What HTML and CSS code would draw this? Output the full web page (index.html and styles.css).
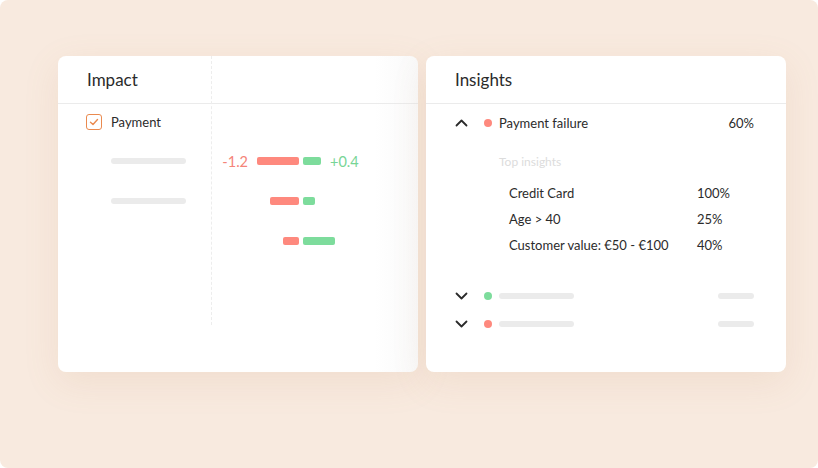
FILE: index.html
```html
<!DOCTYPE html>
<html lang="en">
<head>
  <meta charset="UTF-8">
  <title>Impact &amp; Insights</title>
  <link rel="stylesheet" href="styles.css">
</head>
<body>
  <div class="frame">

    <div class="card impact">
      <div class="col-labels">
        <div class="card-head">Impact</div>
        <div class="row first">
          <span class="checkbox">
            <svg width="10" height="8" viewBox="0 0 10 8"><path d="M1.5 4.2 L4 6.5 L8.5 1.5" fill="none" stroke="#ea8a4f" stroke-width="1.4" stroke-linecap="round" stroke-linejoin="round"/></svg>
          </span>
          <span class="label">Payment</span>
        </div>
        <div class="row"><span class="skeleton label-bar"></span></div>
        <div class="row"><span class="skeleton label-bar"></span></div>
      </div>

      <div class="col-chart">
        <div class="card-head"></div>
        <div class="row first"></div>
        <div class="row bars">
          <div class="neg"><span class="val-neg">-1.2</span><span class="bar red" style="width: 42px"></span></div>
          <div class="pos"><span class="bar green" style="width: 18px"></span><span class="val-pos">+0.4</span></div>
        </div>
        <div class="row bars">
          <div class="neg"><span class="bar red" style="width: 29px"></span></div>
          <div class="pos"><span class="bar green" style="width: 12px"></span></div>
        </div>
        <div class="row bars">
          <div class="neg"><span class="bar red" style="width: 16px"></span></div>
          <div class="pos"><span class="bar green" style="width: 32px"></span></div>
        </div>
      </div>
    </div>

    <div class="card insights">
      <div class="card-head">Insights</div>

      <div class="insight open">
        <svg class="chevron" width="13" height="8" viewBox="0 0 13 8"><path d="M1.5 6.5 L6.5 1.5 L11.5 6.5" fill="none" stroke="#2b2b2b" stroke-width="1.8" stroke-linecap="round" stroke-linejoin="round"/></svg>
        <span class="dot red"></span>
        <span class="name">Payment failure</span>
        <span class="pct">60%</span>
      </div>

      <div class="details">
        <div class="details-title">Top insights</div>
        <div class="detail-row"><span>Credit Card</span><span>100%</span></div>
        <div class="detail-row"><span>Age &gt; 40</span><span>25%</span></div>
        <div class="detail-row"><span>Customer value: €50 - €100</span><span>40%</span></div>
      </div>

      <div class="insight closed">
        <svg class="chevron" width="13" height="8" viewBox="0 0 13 8"><path d="M1.5 1.5 L6.5 6.5 L11.5 1.5" fill="none" stroke="#2b2b2b" stroke-width="1.8" stroke-linecap="round" stroke-linejoin="round"/></svg>
        <span class="dot green"></span>
        <span class="skeleton name-bar"></span>
        <span class="skeleton pct-bar"></span>
      </div>
      <div class="insight closed">
        <svg class="chevron" width="13" height="8" viewBox="0 0 13 8"><path d="M1.5 1.5 L6.5 6.5 L11.5 1.5" fill="none" stroke="#2b2b2b" stroke-width="1.8" stroke-linecap="round" stroke-linejoin="round"/></svg>
        <span class="dot red"></span>
        <span class="skeleton name-bar"></span>
        <span class="skeleton pct-bar"></span>
      </div>
    </div>

  </div>
</body>
</html>
```

FILE: styles.css
```css
body {
  margin: 0;
  background: #fff;
  font-family: Lato, "Open Sans", sans-serif;
  color: #2b2b2b;
}

.frame {
  width: 818px;
  height: 468px;
  box-sizing: border-box;
  padding: 56px 32px 0 58px;
  display: flex;
  align-items: flex-start;
  gap: 8px;
  border-radius: 8px;
  background-color: #f8eadf;
}

.card {
  width: 360px;
  height: 316px;
  background: #fff;
  border-radius: 8px;
  box-shadow: 0 10px 36px rgba(190, 130, 90, 0.12);
  overflow: hidden;
}

.card-head {
  height: 48px;
  box-sizing: border-box;
  padding: 14px 0 0 29px;
  font-size: 17px;
  line-height: 20px;
  border-bottom: 1px solid #ebebeb;
}

/* impact card */

.impact {
  display: flex;
  align-items: flex-start;
  background: linear-gradient(to right, #fff 88%, #f9f9f9 100%);
}

.col-labels {
  width: 153px;
  height: 269px;
  border-right: 1px dashed #ededed;
}

.col-chart {
  flex: 1;
}

.col-chart .card-head {
  padding: 0;
}

.row {
  height: 40px;
  display: flex;
  align-items: center;
}

.row.first {
  height: 37px;
}

.col-labels .row {
  padding-left: 28px;
}

.col-labels .row.first {
  padding-bottom: 2px;
  box-sizing: border-box;
}

.checkbox {
  width: 14px;
  height: 14px;
  border: 1.5px solid #ea8a4f;
  border-radius: 3px;
  display: flex;
  align-items: center;
  justify-content: center;
}

.label {
  margin-left: 9px;
  font-size: 13px;
}

.skeleton {
  display: block;
  height: 6px;
  border-radius: 3px;
  background: #ebebeb;
}

.label-bar {
  width: 75px;
  margin-left: 25px;
}

.bars {
  display: grid;
  grid-template-columns: 87px 1fr;
  column-gap: 4px;
}

.neg, .pos {
  display: flex;
  align-items: center;
  gap: 9px;
}

.neg {
  justify-content: flex-end;
}

.bar {
  height: 8px;
  border-radius: 2px;
}

.bar.red {
  background: #fe897e;
}

.bar.green {
  background: #7ddc9c;
}

.val-neg, .val-pos {
  font-size: 14.5px;
}

.val-neg {
  color: #f58479;
}

.val-pos {
  color: #78d596;
}

/* insights card */

.insight {
  display: flex;
  align-items: center;
  padding: 0 32px 0 29px;
  font-size: 13px;
}

.insight.open {
  height: 37px;
}

.insight.closed {
  height: 28px;
}

.chevron {
  flex: none;
}

.dot {
  width: 8px;
  height: 8px;
  border-radius: 50%;
  margin: 0 7px 0 16px;
}

.dot.red {
  background: #fe897e;
}

.dot.green {
  background: #7ddc9c;
}

.name {
  flex: 1;
}

.name-bar {
  width: 75px;
}

.pct-bar {
  width: 36px;
  margin-left: auto;
}

.details {
  padding: 0 0 21px 73px;
  font-size: 13px;
}

.details-title {
  height: 42px;
  line-height: 42px;
  font-size: 12px;
  color: #dcdcdc;
}

.detail-row {
  display: flex;
  height: 26px;
  line-height: 20px;
  padding-left: 10px;
}

.detail-row span:first-child {
  width: 188px;
}
```
